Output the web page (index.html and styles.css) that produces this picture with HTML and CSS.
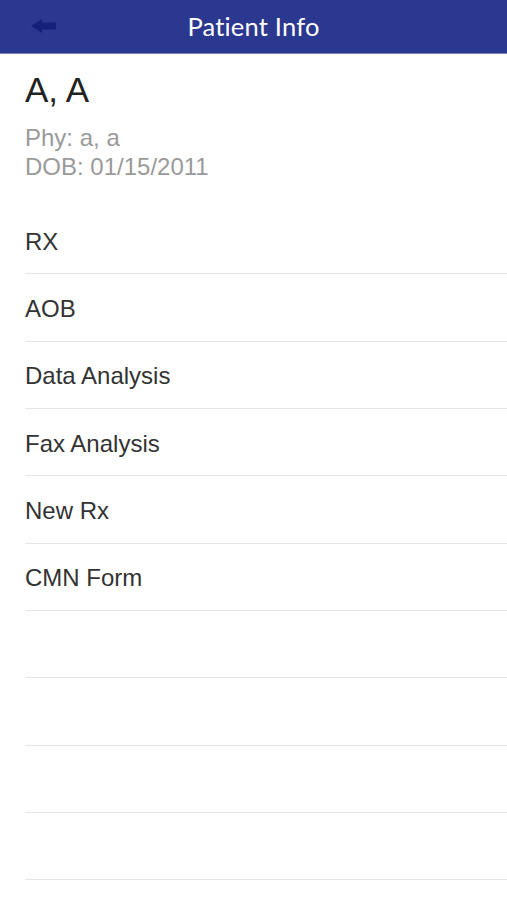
FILE: index.html
```html
<!DOCTYPE html>
<html>
<head>
<meta charset="utf-8">
<link rel="stylesheet" href="styles.css">
</head>
<body>
<header class="navbar">
  <button class="back" aria-label="Back">
    <svg width="26" height="14" viewBox="0 0 26 14"><path d="M0 7 L11 0 L11 3.5 L25 3.5 L25 10.5 L11 10.5 L11 14 Z" fill="#13217a"/></svg>
  </button>
  <h1 class="title">Patient Info</h1>
</header>
<section class="patient">
  <div class="name">A, A</div>
  <div class="meta">Phy: a, a</div>
  <div class="meta">DOB: 01/15/2011</div>
</section>
<ul class="menu">
  <li class="row">RX</li>
  <li class="row">AOB</li>
  <li class="row">Data Analysis</li>
  <li class="row">Fax Analysis</li>
  <li class="row">New Rx</li>
  <li class="row">CMN Form</li>
  <li class="row"></li>
  <li class="row"></li>
  <li class="row"></li>
  <li class="row"></li>
</ul>
</body>
</html>
```
FILE: styles.css
```css
* { box-sizing: border-box; }
html, body { margin: 0; padding: 0; background: #fff; }
body { font-family: "Liberation Sans", Arial, sans-serif; width: 507px; overflow: hidden; }
.navbar {
  height: 54px;
  background: #2b3890;
  border-bottom: 1px solid #7d84b8;
  display: flex;
  align-items: center;
  justify-content: center;
  position: relative;
}
.back {
  position: absolute;
  left: 31px;
  top: 19px;
  padding: 0;
  border: 0;
  background: none;
  display: flex;
}
.title {
  margin: 0 0 2px;
  color: #fff;
  font-family: "Lato", sans-serif;
  font-weight: 400;
  font-size: 25.5px;
  letter-spacing: 0.2px;
}
.patient { padding: 16px 25px 0; }
.name { font-size: 35px; line-height: 40px; color: #222; margin-bottom: 13px; }
.meta { font-size: 24px; line-height: 29px; color: #9a9a9a; }
.menu { list-style: none; margin: 26px 0 0; padding: 0; }
.row {
  height: 67.33px;
  margin-left: 25px;
  border-bottom: 1px solid #e6e6e6;
  display: flex;
  align-items: center;
  font-size: 24px;
  color: #333;
  padding-top: 3px;
}
```
